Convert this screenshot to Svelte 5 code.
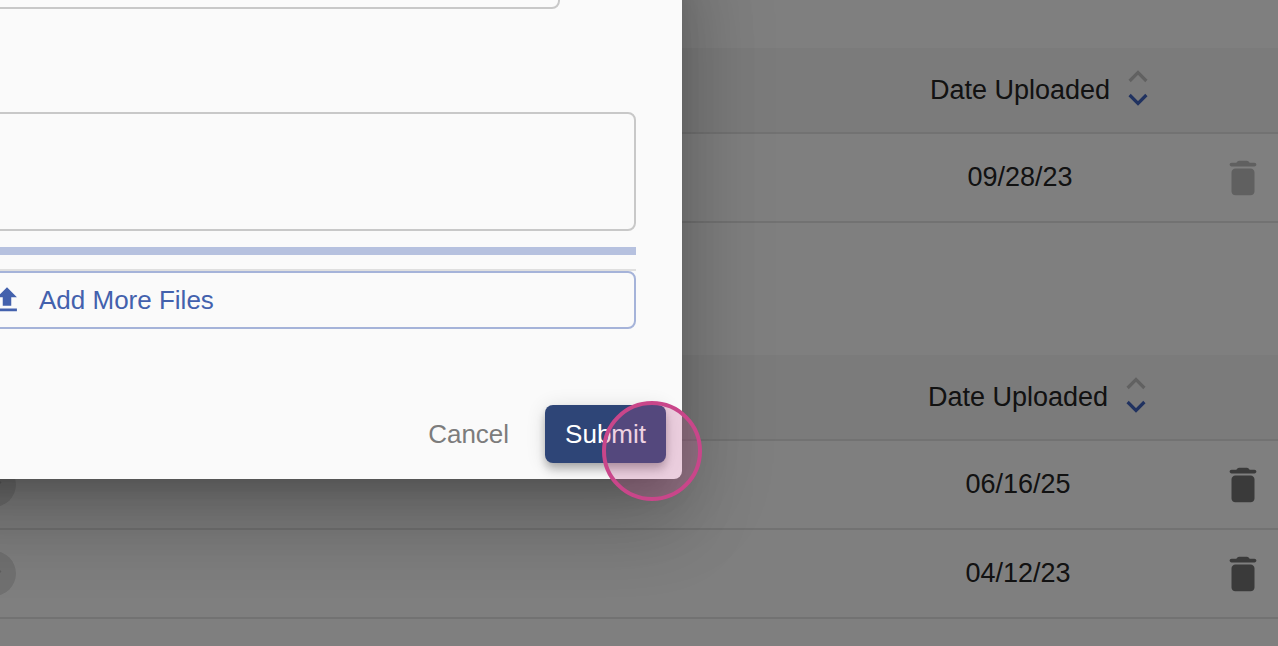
<script>
	import { onMount } from 'svelte';

	const tables = [
		{
			id: 'first',
			actionWidth: 118,
			rows: [{ date: '09/28/23', locked: true, expandable: false }]
		},
		{
			id: 'second',
			actionWidth: 120,
			rows: [
				{ date: '06/16/25', locked: false, expandable: true },
				{ date: '04/12/23', locked: false, expandable: true }
			]
		}
	];

	let name = $state('');
	let files = $state('');
	let dialog;

	onMount(() => {
		dialog.scrollTop = dialog.scrollHeight;
	});
</script>

<div class="screen">
	<main class="page">
		{#each tables as table (table.id)}
			<table class="documents">
				<colgroup>
					<col />
					<col class="date-col" />
					<col style="width: {table.actionWidth}px" />
				</colgroup>
				<thead>
					<tr>
						<th></th>
						<th>
							<button class="sort">
								Date Uploaded
								<svg width="20" height="40" viewBox="0 0 20 40" fill="none" stroke-width="3.2">
									<path class="asc" d="M1.6 11 10 2.6l8.4 8.4" />
									<path class="desc" d="M1.6 25 10 33.4l8.4-8.4" />
								</svg>
							</button>
						</th>
						<th></th>
					</tr>
				</thead>
				<tbody>
					{#each table.rows as row (row.date)}
						<tr>
							<td>
								{#if row.expandable}
									<button class="expand" aria-label="Expand">
										<svg width="30" height="30" viewBox="0 0 24 24">
											<path d="M16.59 8.59 12 13.17 7.41 8.59 6 10l6 6 6-6z" />
										</svg>
									</button>
								{/if}
							</td>
							<td class="date">{row.date}</td>
							<td>
								<button class="delete" disabled={row.locked} aria-label="Delete">
									<svg width="46" height="46" viewBox="0 0 24 24">
										<path
											d="M6 19c0 1.1.9 2 2 2h8c1.1 0 2-.9 2-2V9c0-1.1-.9-2-2-2H8c-1.1 0-2 .9-2 2v10zM18 4h-2.5l-.71-.71c-.18-.18-.44-.29-.7-.29H9.91c-.26 0-.52.11-.7.29L8.5 4H6c-.55 0-1 .45-1 1s.45 1 1 1h12c.55 0 1-.45 1-1s-.45-1-1-1z"
										/>
									</svg>
								</button>
							</td>
						</tr>
					{/each}
				</tbody>
			</table>
		{/each}
	</main>

	<div class="backdrop">
		<div class="dialog" role="dialog" aria-modal="true" aria-label="Upload" bind:this={dialog}>
			<div class="content">
				<input class="field name" type="text" aria-label="Name" bind:value={name} />
				<textarea class="field files" aria-label="Files" bind:value={files}></textarea>
				<div class="progress"></div>
				<hr />
				<button class="add">
					<svg width="34" height="34" viewBox="0 0 24 24">
						<path d="M5 20h14v-2H5v2zm0-10h4v6h6v-6h4l-7-7-7 7z" />
					</svg>
					Add More Files
				</button>
			</div>
			<div class="actions">
				<button class="cancel">Cancel</button>
				<button class="submit">Submit</button>
			</div>
			<span class="pointer"></span>
		</div>
	</div>
</div>

<style>
	:global(body) {
		background-color: #fff;
		font-family: 'Liberation Sans', Arial, sans-serif;
	}

	.screen {
		position: relative;
		height: 100vh;
		overflow: hidden;
	}

	.page {
		display: flex;
		flex-direction: column;
		gap: 132px;
		padding-top: 48px;
	}

	button {
		display: flex;
		align-items: center;
		box-sizing: border-box;
		margin: 0;
		padding: 0;
		border: none;
		background: none;
		font-family: inherit;
		font-size: 26px;
		cursor: pointer;
	}

	.documents {
		width: 100%;
		table-layout: fixed;
		border-collapse: separate;
		border-spacing: 0;
		font-size: 27px;
		color: #242424;
	}

	.date-col {
		width: 280px;
	}

	th,
	td {
		box-sizing: border-box;
		padding: 0;
		border-bottom: 2px solid #e4e4e4;
	}

	th {
		height: 86px;
		background-color: #f6f6f6;
	}

	td {
		height: 89px;
	}

	.date {
		text-align: center;
	}

	.sort {
		gap: 18px;
		margin: 0 auto;
		padding-left: 38px;
		font-size: 27px;
		color: #242424;
		white-space: nowrap;
	}

	.asc {
		stroke: #c2c2c2;
	}

	.desc {
		stroke: #4164c0;
	}

	.expand {
		justify-content: center;
		width: 45px;
		height: 45px;
		margin-left: -29px;
		border-radius: 50%;
		background-color: #e2e2e2;
		fill: #c0c0c0;
	}

	.delete {
		margin-left: auto;
		margin-right: 12px;
		fill: #757575;
	}

	.delete:disabled {
		fill: #c0c0c0;
	}

	.backdrop {
		position: absolute;
		inset: 0;
		display: grid;
		grid-template-columns: 682fr 596fr;
		align-items: start;
		background-color: rgba(0, 0, 0, 0.5);
	}

	/* the dialog runs past the top and left edges of the window */
	.dialog {
		position: relative;
		margin: -60px 0 0 -80px;
		border-radius: 8px;
		background-color: #fafafa;
		box-shadow:
			0 21px 29px -14px rgba(0, 0, 0, 0.2),
			0 46px 73px 6px rgba(0, 0, 0, 0.14),
			0 17px 89px 15px rgba(0, 0, 0, 0.12);
	}

	.content {
		display: flex;
		flex-direction: column;
		padding: 0 46px;
	}

	.field {
		box-sizing: border-box;
		margin: 0;
		padding: 16px;
		border: 2px solid #c8c8c8;
		border-radius: 8px;
		background: none;
		font-family: inherit;
		font-size: 27px;
		resize: none;
		outline: none;
	}

	.name {
		height: 69px;
		margin-right: 76px;
	}

	.files {
		height: 119px;
		margin-top: 103px;
	}

	.progress {
		height: 8px;
		margin-top: 16px;
		background-color: #b6c1df;
	}

	hr {
		width: 100%;
		margin: 14px 0 0;
		border: none;
		border-top: 2px solid #dfdfdf;
	}

	.add {
		gap: 15px;
		height: 58px;
		padding: 0 22px;
		border: 2px solid #a5b3d9;
		border-radius: 8px;
		color: #4361ad;
		fill: #4361ad;
	}

	.actions {
		display: flex;
		justify-content: flex-end;
		gap: 16px;
		padding: 76px 16px 16px;
	}

	.cancel,
	.submit {
		height: 58px;
		padding: 0 20px;
		border-radius: 8px;
	}

	.cancel {
		color: #7c7c7c;
	}

	.submit {
		background-color: #2e4577;
		color: #fff;
		box-shadow:
			0 4px 8px -2px rgba(0, 0, 0, 0.2),
			0 8px 10px rgba(0, 0, 0, 0.14),
			0 2px 20px rgba(0, 0, 0, 0.12);
	}

	.pointer {
		position: absolute;
		right: -20px;
		bottom: -22px;
		box-sizing: border-box;
		width: 100px;
		height: 100px;
		border: 4px solid #c9468a;
		border-radius: 50%;
		background-color: rgba(194, 80, 142, 0.26);
		pointer-events: none;
	}
</style>
